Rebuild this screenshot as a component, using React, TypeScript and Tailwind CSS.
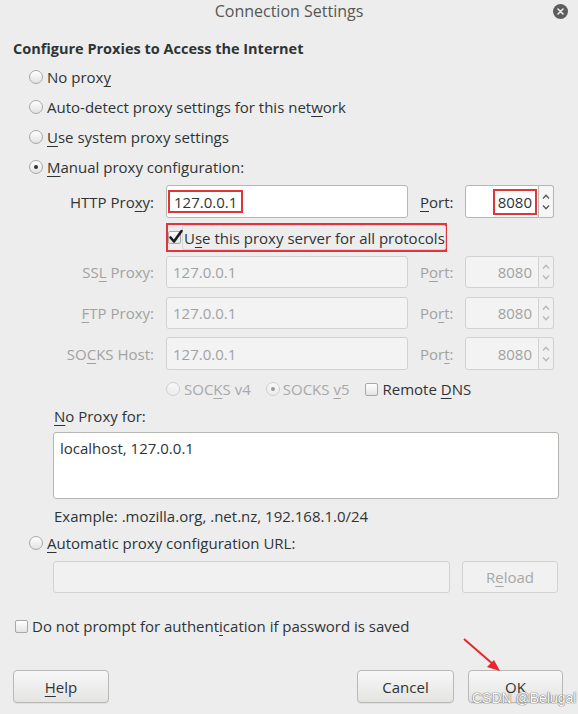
import React from "react";

// mnemonic letter (underlined access key)
const U = ({ children }: { children: React.ReactNode }) => (
  <span className="underline underline-offset-[3px] decoration-1">{children}</span>
);

const Radio = ({ checked = false, disabled = false }: { checked?: boolean; disabled?: boolean }) => (
  <span
    className={
      "w-[14px] h-[14px] rounded-full border flex items-center justify-center shrink-0 " +
      (disabled
        ? "border-[#cfcfcf] bg-gradient-to-b from-[#f8f8f8] to-[#ececec]"
        : "border-[#a8a8a8] bg-gradient-to-b from-[#ffffff] to-[#e2e2e2]")
    }
  >
    {checked && (
      <span className={"w-[4px] h-[4px] rounded-full " + (disabled ? "bg-[#9a9a9a]" : "bg-[#2e3436]")} />
    )}
  </span>
);

const Checkbox = ({ checked = false }: { checked?: boolean }) => (
  <span className="relative w-[13px] h-[13px] rounded-[2px] border border-[#a8a8a8] bg-gradient-to-b from-[#ffffff] to-[#e4e4e4] shrink-0">
    {checked && (
      <svg className="absolute -left-[1px] -top-[3px]" width="16" height="16" viewBox="0 0 16 16">
        <path d="M2.5 8.5 L6 12.5 L13.5 2" fill="none" stroke="#1e1e1e" strokeWidth="2.6" strokeLinecap="round" strokeLinejoin="round" />
      </svg>
    )}
  </span>
);

const Spinner = ({ disabled = false }: { disabled?: boolean }) => {
  const c = disabled ? "#b8b8b8" : "#555753";
  return (
    <div
      className={
        "w-[15px] h-full border border-l-0 rounded-r-[3px] flex flex-col items-center justify-center gap-[6px] " +
        (disabled ? "border-[#d2d2d2] bg-[#f0f0f0]" : "border-[#b6b6b3] bg-[#f6f6f6]")
      }
    >
      <svg width="8" height="5" viewBox="0 0 8 5">
        <polyline points="1,4.5 4,1.2 7,4.5" fill="none" stroke={c} strokeWidth="1.3" />
      </svg>
      <svg width="8" height="5" viewBox="0 0 8 5">
        <polyline points="1,0.5 4,3.8 7,0.5" fill="none" stroke={c} strokeWidth="1.3" />
      </svg>
    </div>
  );
};

const ProxyRow = ({
  label,
  portLabel,
  className,
}: {
  label: React.ReactNode;
  portLabel: React.ReactNode;
  className: string;
}) => (
  <div className={"flex items-stretch text-[#a2a2a2] " + className}>
    <div className="w-[154px] flex items-center justify-end">{label}</div>
    <div className="ml-[12px] w-[242px] rounded-[3px] border border-[#d2d2d2] bg-[#f3f3f3] flex items-center pl-[6px]">
      127.0.0.1
    </div>
    <div className="ml-[12px] w-[45px] flex items-center">{portLabel}</div>
    <div className="w-[74px] rounded-l-[3px] border border-[#d2d2d2] bg-[#f3f3f3] flex items-center justify-end pr-[6px]">
      8080
    </div>
    <Spinner disabled />
  </div>
);

export default function App() {
  return (
    <div className="relative w-[578px] h-[714px] overflow-hidden bg-[#ededed] text-[#2e3436] text-[15px] leading-[22px] font-['Open_Sans',sans-serif] flex flex-col">
      {/* Title bar */}
      <div className="h-[22px] flex items-center">
        <div className="w-[36px]" />
        <div className="flex-1 text-center text-[16px] text-[#555753]">Connection Settings</div>
        <div className="w-[36px] flex justify-center">
          <span className="w-[15px] h-[15px] rounded-full bg-[#5d5f5c] flex items-center justify-center">
            <svg width="7" height="7" viewBox="0 0 7 7">
              <path d="M1 1 L6 6 M6 1 L1 6" stroke="#ededed" strokeWidth="1.6" strokeLinecap="round" />
            </svg>
          </span>
        </div>
      </div>

      <div className="mt-[15px] h-[24px] pl-[13px] flex items-center font-bold text-[14.5px]">
        Configure Proxies to Access the Internet
      </div>

      {/* Proxy modes */}
      <div className="mt-[1px] flex flex-col">
        <div className="h-[30px] pl-[29px] flex items-center gap-[4px]">
          <Radio />
          <span>No prox<U>y</U></span>
        </div>
        <div className="h-[30px] pl-[29px] flex items-center gap-[4px]">
          <Radio />
          <span>Auto-detect proxy settings for this net<U>w</U>ork</span>
        </div>
        <div className="h-[30px] pl-[29px] flex items-center gap-[4px]">
          <Radio />
          <span><U>U</U>se system proxy settings</span>
        </div>
        <div className="h-[30px] pl-[29px] flex items-center gap-[4px]">
          <Radio checked />
          <span><U>M</U>anual proxy configuration:</span>
        </div>
      </div>

      {/* HTTP proxy */}
      <div className="mt-[3px] h-[33px] flex items-stretch">
        <div className="w-[154px] flex items-center justify-end">
          <span>HTTP Pro<U>x</U>y:</span>
        </div>
        <div className="ml-[12px] w-[242px] rounded-[3px] border border-[#b6b6b3] bg-white flex items-center pl-[1px]">
          <span className="border-2 border-[#e2343c] h-[23px] px-[4px] flex items-center">127.0.0.1</span>
        </div>
        <div className="ml-[12px] w-[45px] flex items-center">
          <span><U>P</U>ort:</span>
        </div>
        <div className="w-[74px] rounded-l-[3px] border border-[#b6b6b3] bg-white flex items-center justify-end pr-[1px]">
          <span className="border-2 border-[#e2343c] h-[26px] px-[3px] flex items-center">8080</span>
        </div>
        <Spinner />
      </div>

      {/* use same proxy */}
      <div className="mt-[5px] h-[29px] ml-[166px] w-[281px] border-2 border-[#e2343c] flex items-center">
        <Checkbox checked />
        <div className="ml-[1px] h-[25px] flex-1 border border-[#d6d6d6] rounded-[2px] flex items-center pl-[1px] whitespace-nowrap">
          <span>U<U>s</U>e this proxy server for all protocols</span>
        </div>
      </div>

      <ProxyRow className="mt-[4px] h-[32px]" label={<span>SS<U>L</U> Proxy:</span>} portLabel={<span>P<U>o</U>rt:</span>} />
      <ProxyRow className="mt-[9px] h-[32px]" label={<span><U>F</U>TP Proxy:</span>} portLabel={<span>Po<U>r</U>t:</span>} />
      <ProxyRow className="mt-[8px] h-[33px]" label={<span>SO<U>C</U>KS Host:</span>} portLabel={<span>Por<U>t</U>:</span>} />

      {/* SOCKS version */}
      <div className="mt-[7px] h-[24px] pl-[166px] flex items-center">
        <Radio disabled />
        <span className="ml-[4px] text-[#a8a8a8]">SOC<U>K</U>S v4</span>
        <span className="ml-[15px]">
          <Radio checked disabled />
        </span>
        <span className="ml-[3px] text-[#a8a8a8]">SOCKS <U>v</U>5</span>
        <span className="ml-[16px] flex">
          <Checkbox />
        </span>
        <span className="ml-[4px]">Remote <U>D</U>NS</span>
      </div>

      {/* No proxy for */}
      <div className="mt-[4px] h-[22px] pl-[54px] flex items-center">
        <span><U>N</U>o Proxy for:</span>
      </div>
      <div className="mt-[5px] ml-[53px] w-[506px] h-[67px] rounded-[3px] border border-[#b6b6b3] bg-white pl-[6px] pt-[4px]">
        localhost, 127.0.0.1
      </div>
      <div className="mt-[6px] h-[22px] pl-[54px] flex items-center">
        Example: .mozilla.org, .net.nz, 192.168.1.0/24
      </div>

      {/* Automatic */}
      <div className="mt-[5px] h-[22px] pl-[29px] flex items-center gap-[4px]">
        <Radio />
        <span><U>A</U>utomatic proxy configuration URL:</span>
      </div>
      <div className="mt-[7px] h-[32px] flex items-stretch">
        <div className="ml-[53px] w-[397px] rounded-[3px] border border-[#d2d2d2] bg-[#f1f1f1]" />
        <div className="ml-[12px] w-[96px] rounded-[3px] border border-[#d2d2d2] bg-[#f1f1f1] flex items-center justify-center text-[#a8a8a8]">
          <span>R<U>e</U>load</span>
        </div>
      </div>

      {/* auth */}
      <div className="mt-[22px] h-[22px] pl-[15px] flex items-center gap-[4px]">
        <Checkbox />
        <span>Do not prompt for authent<U>i</U>cation if password is saved</span>
      </div>

      {/* buttons */}
      <div className="mt-[33px] h-[33px] flex items-stretch">
        <button className="ml-[13px] w-[96px] rounded-[4px] border border-[#b8b8b5] bg-gradient-to-b from-[#f7f7f7] to-[#e4e4e3] shadow-[0_1px_0_rgba(0,0,0,0.05)] flex items-center justify-center">
          <span><U>H</U>elp</span>
        </button>
        <button className="ml-auto w-[97px] rounded-[4px] border border-[#b8b8b5] bg-gradient-to-b from-[#f7f7f7] to-[#e4e4e3] shadow-[0_1px_0_rgba(0,0,0,0.05)] flex items-center justify-center">
          Cancel
        </button>
        <button className="ml-[14px] mr-[15px] w-[95px] rounded-[4px] border border-[#b8b8b5] bg-gradient-to-b from-[#f7f7f7] to-[#e4e4e3] shadow-[0_1px_0_rgba(0,0,0,0.05)] flex items-center justify-center">
          OK
        </button>
      </div>

      {/* red annotation arrow */}
      <svg className="absolute left-[460px] top-[636px]" width="44" height="40" viewBox="0 0 44 40">
        <line x1="4" y1="3" x2="34" y2="29" stroke="#e8262c" strokeWidth="2" />
        <polygon points="40,35 27,31 34,24" fill="#e8262c" />
      </svg>

      {/* watermark */}
      <div className="absolute left-[472px] top-[689px] text-[14px] leading-[18px] text-white font-['Liberation_Sans',sans-serif] [text-shadow:0_0_1px_#555,0_0_1px_#555]">
        CSDN @Belugal
      </div>
    </div>
  );
}
